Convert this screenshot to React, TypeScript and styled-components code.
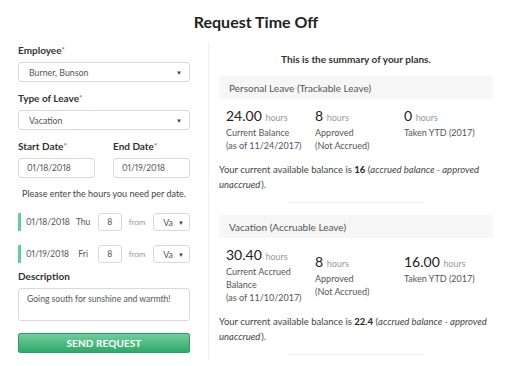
import styled, { createGlobalStyle } from "styled-components";

const GlobalStyle = createGlobalStyle`
  body {
    margin: 0;
    background: #fff;
    font-family: Lato, "Open Sans", "Liberation Sans", sans-serif;
    color: #333;
  }
`;

const Page = styled.div`
  width: 512px;
  height: 366px;
  overflow: hidden;
`;

const Title = styled.h1`
  margin: 0;
  padding-top: 12px;
  text-align: center;
  font-size: 16px;
  line-height: 20px;
  font-weight: 700;
  color: #222;
`;

const Main = styled.div`
  display: flex;
  padding: 10px 19px 0 18px;
`;

const FormCol = styled.div`
  width: 172px;
  margin-right: 18px;
  padding-top: 1px;
`;

const Label = styled.div`
  font-size: 10px;
  line-height: 14px;
  font-weight: 700;
  color: #333;
  margin-bottom: 5px;
`;

const Req = styled.span`
  color: #e05a4f;
  font-size: 8px;
  vertical-align: top;
`;

const Field = styled.div`
  margin-bottom: 9px;
`;

const SelectBox = styled.div<{ $w?: number }>`
  box-sizing: border-box;
  width: ${(p) => (p.$w ? `${p.$w}px` : "100%")};
  height: 20px;
  border: 1px solid #d9d9d9;
  border-radius: 3px;
  display: flex;
  align-items: center;
  justify-content: space-between;
  padding: 0 7px 0 10px;
  font-size: 8.8px;
  color: #555;
  overflow: hidden;
  white-space: nowrap;
`;

const Caret = styled.span`
  font-size: 6px;
  color: #444;
`;

const DateRow = styled.div`
  display: flex;
  justify-content: space-between;
`;

const DateField = styled.div`
  width: 77px;
`;

const InputBox = styled.div`
  box-sizing: border-box;
  height: 20px;
  border: 1px solid #d9d9d9;
  border-radius: 3px;
  display: flex;
  align-items: center;
  padding-left: 8px;
  font-size: 8.5px;
  font-variant-numeric: proportional-nums;
  color: #555;
`;

const Hint = styled.div`
  font-size: 9px;
  line-height: 14px;
  color: #444;
  text-align: center;
  white-space: nowrap;
  margin-bottom: 12px;
`;

const HourRows = styled.div`
  display: flex;
  flex-direction: column;
  gap: 14px;
  margin-bottom: 6px;
`;

const HourRow = styled.div`
  display: flex;
  align-items: center;
  height: 18px;
  border-left: 3px solid #5fd08f;
  padding-left: 5px;
  font-size: 8.5px;
  font-variant-numeric: proportional-nums;
  color: #555;
`;

const RowDate = styled.span`
  width: 46px;
  white-space: nowrap;
`;

const RowDay = styled.span`
  width: 24px;
  text-align: center;
`;

const HourInput = styled.div`
  box-sizing: border-box;
  width: 24px;
  height: 18px;
  border: 1px solid #d9d9d9;
  border-radius: 3px;
  display: flex;
  align-items: center;
  justify-content: center;
  margin-left: 3px;
`;

const From = styled.span`
  font-size: 8px;
  color: #999;
  margin: 0 8px 0 7px;
`;

const SmallSelect = styled(SelectBox)`
  height: 18px;
  padding: 0 5px 0 9px;
`;

const TextArea = styled.div`
  box-sizing: border-box;
  height: 33px;
  border: 1px solid #d9d9d9;
  border-radius: 3px;
  padding: 5px 8px;
  font-size: 8.6px;
  color: #555;
  margin-bottom: 10px;
  white-space: nowrap;
`;

const SendButton = styled.button`
  width: 100%;
  height: 20px;
  border: 1px solid #2a9d60;
  border-radius: 2px;
  background: linear-gradient(#72cc9f, #2eaa68);
  color: #fff;
  font-family: inherit;
  font-size: 10px;
  font-weight: 700;
  letter-spacing: 0.1px;
  padding: 0;
`;

const Summary = styled.div`
  flex: 1;
  border-left: 1px solid #eeeeee;
  padding-left: 10px;
  height: 318px;
  overflow: hidden;
`;

const SummaryTitle = styled.div`
  text-align: center;
  font-size: 10px;
  line-height: 14px;
  font-weight: 700;
  color: #333;
  margin: 10px 0 10px;
`;

const PlanHeader = styled.div`
  height: 23px;
  background: #f6f6f6;
  display: flex;
  align-items: center;
  padding-left: 10px;
  font-size: 10px;
  color: #555;
`;

const Stats = styled.div`
  display: flex;
  align-items: flex-start;
  padding: 9px 0 0 7px;
`;

const Stat = styled.div<{ $offset?: number }>`
  width: 89px;
  margin-top: ${(p) => p.$offset ?? 0}px;
`;

const Big = styled.div`
  font-size: 14px;
  line-height: 16px;
  color: #222;
`;

const Unit = styled.span`
  font-size: 9px;
  color: #999;
`;

const StatLine = styled.div`
  font-size: 9px;
  line-height: 13px;
  color: #555;
`;

const Balance = styled.p`
  margin: 10px 0 0;
  font-size: 9.5px;
  line-height: 15px;
  color: #444;
  b {
    font-weight: 700;
    color: #222;
  }
  i {
    padding-right: 1px;
  }
`;

const Rule = styled.hr`
  width: 137px;
  border: none;
  border-top: 1px solid #eeeeee;
  margin: 10px auto 12px;
`;

type Plan = {
  name: string;
  stats: { value: string; lines: string[]; offset?: number }[];
  available: string;
};

const plans: Plan[] = [
  {
    name: "Personal Leave (Trackable Leave)",
    stats: [
      { value: "24.00", lines: ["Current Balance", "(as of 11/24/2017)"] },
      { value: "8", lines: ["Approved", "(Not Accrued)"] },
      { value: "0", lines: ["Taken YTD (2017)"] },
    ],
    available: "16",
  },
  {
    name: "Vacation (Accruable Leave)",
    stats: [
      {
        value: "30.40",
        lines: ["Current Accrued", "Balance", "(as of 11/10/2017)"],
      },
      { value: "8", lines: ["Approved", "(Not Accrued)"], offset: 7 },
      { value: "16.00", lines: ["Taken YTD (2017)"], offset: 7 },
    ],
    available: "22.4",
  },
];

const hourRows = [
  { date: "01/18/2018", day: "Thu" },
  { date: "01/19/2018", day: "Fri" },
];

export default function App() {
  return (
    <Page>
      <GlobalStyle />
      <Title>Request Time Off</Title>
      <Main>
        <FormCol>
          <Field>
            <Label>
              Employee<Req>*</Req>
            </Label>
            <SelectBox>
              Burner, Bunson <Caret>▼</Caret>
            </SelectBox>
          </Field>
          <Field>
            <Label>
              Type of Leave<Req>*</Req>
            </Label>
            <SelectBox>
              Vacation <Caret>▼</Caret>
            </SelectBox>
          </Field>
          <Field>
            <DateRow>
              <DateField>
                <Label>
                  Start Date<Req>*</Req>
                </Label>
                <InputBox>01/18/2018</InputBox>
              </DateField>
              <DateField>
                <Label>
                  End Date<Req>*</Req>
                </Label>
                <InputBox>01/19/2018</InputBox>
              </DateField>
            </DateRow>
          </Field>
          <Hint>Please enter the hours you need per date.</Hint>
          <HourRows>
            {hourRows.map((r) => (
              <HourRow key={r.date}>
                <RowDate>{r.date}</RowDate>
                <RowDay>{r.day}</RowDay>
                <HourInput>8</HourInput>
                <From>from</From>
                <SmallSelect $w={37}>
                  Va <Caret>▼</Caret>
                </SmallSelect>
              </HourRow>
            ))}
          </HourRows>
          <Label>Description</Label>
          <TextArea>Going south for sunshine and warmth!</TextArea>
          <SendButton>SEND REQUEST</SendButton>
        </FormCol>
        <Summary>
          <SummaryTitle>This is the summary of your plans.</SummaryTitle>
          {plans.map((plan) => (
            <div key={plan.name}>
              <PlanHeader>{plan.name}</PlanHeader>
              <Stats>
                {plan.stats.map((s, i) => (
                  <Stat key={i} $offset={s.offset}>
                    <Big>
                      {s.value} <Unit>hours</Unit>
                    </Big>
                    {s.lines.map((l) => (
                      <StatLine key={l}>{l}</StatLine>
                    ))}
                  </Stat>
                ))}
              </Stats>
              <Balance>
                Your current available balance is <b>{plan.available}</b> (
                <i>accrued balance - approved unaccrued</i>).
              </Balance>
              <Rule />
            </div>
          ))}
        </Summary>
      </Main>
    </Page>
  );
}
